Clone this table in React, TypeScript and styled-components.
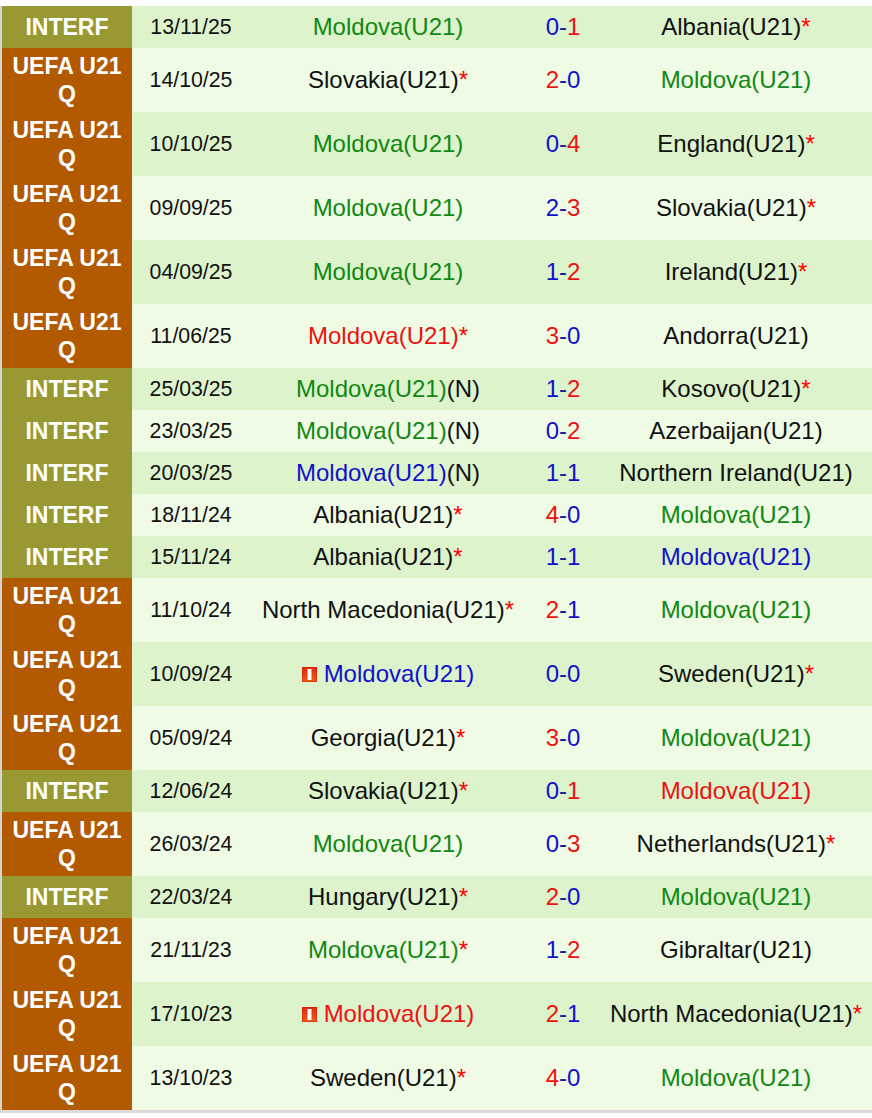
import React from "react";
import styled, { createGlobalStyle } from "styled-components";

const GlobalStyle = createGlobalStyle`
  html, body { margin: 0; padding: 0; background: #ffffff; }
  body { font-family: "Liberation Sans", Arial, sans-serif; }
`;

type Comp = "INTERF" | "UEFA";
type Side = { name: string; star?: boolean; neutral?: boolean; flag?: boolean };
type Match = { comp: Comp; date: string; home: Side; score: [number, number]; away: Side };

const M = "Moldova(U21)";
const matches: Match[] = [
  { comp: "INTERF", date: "13/11/25", home: { name: M }, score: [0, 1], away: { name: "Albania(U21)", star: true } },
  { comp: "UEFA", date: "14/10/25", home: { name: "Slovakia(U21)", star: true }, score: [2, 0], away: { name: M } },
  { comp: "UEFA", date: "10/10/25", home: { name: M }, score: [0, 4], away: { name: "England(U21)", star: true } },
  { comp: "UEFA", date: "09/09/25", home: { name: M }, score: [2, 3], away: { name: "Slovakia(U21)", star: true } },
  { comp: "UEFA", date: "04/09/25", home: { name: M }, score: [1, 2], away: { name: "Ireland(U21)", star: true } },
  { comp: "UEFA", date: "11/06/25", home: { name: M, star: true }, score: [3, 0], away: { name: "Andorra(U21)" } },
  { comp: "INTERF", date: "25/03/25", home: { name: M, neutral: true }, score: [1, 2], away: { name: "Kosovo(U21)", star: true } },
  { comp: "INTERF", date: "23/03/25", home: { name: M, neutral: true }, score: [0, 2], away: { name: "Azerbaijan(U21)" } },
  { comp: "INTERF", date: "20/03/25", home: { name: M, neutral: true }, score: [1, 1], away: { name: "Northern Ireland(U21)" } },
  { comp: "INTERF", date: "18/11/24", home: { name: "Albania(U21)", star: true }, score: [4, 0], away: { name: M } },
  { comp: "INTERF", date: "15/11/24", home: { name: "Albania(U21)", star: true }, score: [1, 1], away: { name: M } },
  { comp: "UEFA", date: "11/10/24", home: { name: "North Macedonia(U21)", star: true }, score: [2, 1], away: { name: M } },
  { comp: "UEFA", date: "10/09/24", home: { name: M, flag: true }, score: [0, 0], away: { name: "Sweden(U21)", star: true } },
  { comp: "UEFA", date: "05/09/24", home: { name: "Georgia(U21)", star: true }, score: [3, 0], away: { name: M } },
  { comp: "INTERF", date: "12/06/24", home: { name: "Slovakia(U21)", star: true }, score: [0, 1], away: { name: M } },
  { comp: "UEFA", date: "26/03/24", home: { name: M }, score: [0, 3], away: { name: "Netherlands(U21)", star: true } },
  { comp: "INTERF", date: "22/03/24", home: { name: "Hungary(U21)", star: true }, score: [2, 0], away: { name: M } },
  { comp: "UEFA", date: "21/11/23", home: { name: M, star: true }, score: [1, 2], away: { name: "Gibraltar(U21)" } },
  { comp: "UEFA", date: "17/10/23", home: { name: M, flag: true }, score: [2, 1], away: { name: "North Macedonia(U21)", star: true } },
  { comp: "UEFA", date: "13/10/23", home: { name: "Sweden(U21)", star: true }, score: [4, 0], away: { name: M } },
];

const Page = styled.div`
  padding-top: 6px;
`;

const Table = styled.div`
  width: 870px;
  border-left: 2px solid #d4d4d4;
  border-bottom: 3px solid #dadada;
`;

const Row = styled.div<{ $tall: boolean; $shade: boolean }>`
  display: grid;
  grid-template-columns: 130px 118px 276px 74px 272px;
  height: ${(p) => (p.$tall ? 64 : 42)}px;
  background: ${(p) => (p.$shade ? "#dcf3cc" : "#effbe5")};
`;

const CompCell = styled.div<{ $comp: Comp }>`
  display: flex;
  align-items: center;
  justify-content: center;
  text-align: center;
  background: ${(p) => (p.$comp === "INTERF" ? "#999933" : "#b35900")};
  color: #ffffff;
  font-weight: bold;
  font-size: 23px;
  line-height: 28px;
  padding: 0 4px;
`;

const DateCell = styled.div`
  display: flex;
  align-items: center;
  justify-content: center;
  font-size: 21.3px;
  color: #111111;
`;

const TeamCell = styled.div`
  display: flex;
  align-items: center;
  justify-content: center;
  font-size: 24px;
  white-space: nowrap;
`;

const TeamName = styled.span<{ $color: string }>`
  color: ${(p) => p.$color};
`;

const Star = styled.span`
  color: #ff0000;
`;

const Neutral = styled.span`
  color: #111111;
`;

const ScoreCell = styled.div`
  display: flex;
  align-items: center;
  justify-content: center;
  font-size: 24px;
  color: #1a1a99;
`;

const Goal = styled.span<{ $win: boolean }>`
  color: ${(p) => (p.$win ? "#ee1111" : "#1111cc")};
`;

const FlagWrap = styled.span`
  display: inline-flex;
  margin-right: 7px;
`;

const Flag = () => (
  <FlagWrap>
    <svg width="15" height="15" viewBox="0 0 15 15">
      <defs>
        <linearGradient id="fg" x1="0" y1="0" x2="0" y2="1">
          <stop offset="0" stopColor="#e22a10" />
          <stop offset="1" stopColor="#f25a10" />
        </linearGradient>
      </defs>
      <rect x="0" y="0" width="15" height="15" fill="url(#fg)" />
      <rect x="0" y="0" width="15" height="15" fill="none" stroke="#c41e08" strokeWidth="1" />
      <rect x="5.5" y="2" width="4" height="11" fill="#ffffff" />
    </svg>
  </FlagWrap>
);

function teamColor(side: Side, own: number, other: number): string {
  if (side.name !== M) return "#111111";
  if (own > other) return "#ee1111";
  if (own < other) return "#118811";
  return "#1111cc";
}

const Team = ({ side, own, other }: { side: Side; own: number; other: number }) => (
  <TeamCell>
    {side.flag && <Flag />}
    <TeamName $color={teamColor(side, own, other)}>{side.name}</TeamName>
    {side.neutral && <Neutral>(N)</Neutral>}
    {side.star && <Star>*</Star>}
  </TeamCell>
);

export default function App() {
  return (
    <>
      <GlobalStyle />
      <Page>
        <Table>
          {matches.map((m, i) => {
            const [h, a] = m.score;
            return (
              <Row key={i} $tall={m.comp === "UEFA"} $shade={i % 2 === 0}>
                <CompCell $comp={m.comp}>{m.comp === "INTERF" ? "INTERF" : "UEFA U21 Q"}</CompCell>
                <DateCell>{m.date}</DateCell>
                <Team side={m.home} own={h} other={a} />
                <ScoreCell>
                  <Goal $win={h > a}>{h}</Goal>-<Goal $win={a > h}>{a}</Goal>
                </ScoreCell>
                <Team side={m.away} own={a} other={h} />
              </Row>
            );
          })}
        </Table>
      </Page>
    </>
  );
}
